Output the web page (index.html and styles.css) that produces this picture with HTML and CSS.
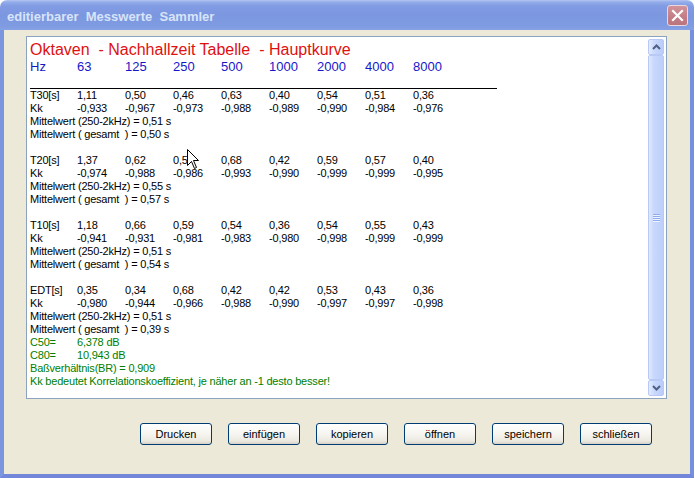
FILE: index.html
```html
<!DOCTYPE html>
<html lang="de">
<head>
<meta charset="utf-8">
<title>editierbarer Messwerte Sammler</title>
<link rel="stylesheet" href="styles.css">
</head>
<body>
<div class="window">
  <div class="titlebar">
    <span class="title">editierbarer  Messwerte  Sammler</span>
    <div class="close">
      <svg width="13" height="13" viewBox="0 0 13 13"><path d="M2 2 L11 11 M11 2 L2 11" stroke="#fff" stroke-width="2.2" stroke-linecap="square"/></svg>
    </div>
  </div>
  <div class="frame">
    <div class="memo">
      <div class="content">
        <div class="heading">Oktaven  - Nachhallzeit Tabelle  - Hauptkurve</div>
        <div class="row hz"><span>Hz</span><span>63</span><span>125</span><span>250</span><span>500</span><span>1000</span><span>2000</span><span>4000</span><span>8000</span></div>
        <div class="rule"></div>

        <div class="row"><span>T30[s]</span><span>1,11</span><span>0,50</span><span>0,46</span><span>0,63</span><span>0,40</span><span>0,54</span><span>0,51</span><span>0,36</span></div>
        <div class="row"><span>Kk</span><span>-0,933</span><span>-0,967</span><span>-0,973</span><span>-0,988</span><span>-0,989</span><span>-0,990</span><span>-0,984</span><span>-0,976</span></div>
        <div class="line">Mittelwert (250-2kHz) = 0,51 s</div>
        <div class="line">Mittelwert ( gesamt  ) = 0,50 s</div>
        <div class="line"> </div>

        <div class="row"><span>T20[s]</span><span>1,37</span><span>0,62</span><span>0,5</span><span>0,68</span><span>0,42</span><span>0,59</span><span>0,57</span><span>0,40</span></div>
        <div class="row"><span>Kk</span><span>-0,974</span><span>-0,988</span><span>-0,986</span><span>-0,993</span><span>-0,990</span><span>-0,999</span><span>-0,999</span><span>-0,995</span></div>
        <div class="line">Mittelwert (250-2kHz) = 0,55 s</div>
        <div class="line">Mittelwert ( gesamt  ) = 0,57 s</div>
        <div class="line"> </div>

        <div class="row"><span>T10[s]</span><span>1,18</span><span>0,66</span><span>0,59</span><span>0,54</span><span>0,36</span><span>0,54</span><span>0,55</span><span>0,43</span></div>
        <div class="row"><span>Kk</span><span>-0,941</span><span>-0,931</span><span>-0,981</span><span>-0,983</span><span>-0,980</span><span>-0,998</span><span>-0,999</span><span>-0,999</span></div>
        <div class="line">Mittelwert (250-2kHz) = 0,51 s</div>
        <div class="line">Mittelwert ( gesamt  ) = 0,54 s</div>
        <div class="line"> </div>

        <div class="row"><span>EDT[s]</span><span>0,35</span><span>0,34</span><span>0,68</span><span>0,42</span><span>0,42</span><span>0,53</span><span>0,43</span><span>0,36</span></div>
        <div class="row"><span>Kk</span><span>-0,980</span><span>-0,944</span><span>-0,966</span><span>-0,988</span><span>-0,990</span><span>-0,997</span><span>-0,997</span><span>-0,998</span></div>
        <div class="line">Mittelwert (250-2kHz) = 0,51 s</div>
        <div class="line">Mittelwert ( gesamt  ) = 0,39 s</div>
        <div class="row green"><span>C50=</span><span class="wide">6,378 dB</span></div>
        <div class="row green"><span>C80=</span><span class="wide">10,943 dB</span></div>
        <div class="line green">Baßverhältnis(BR) = 0,909</div>
        <div class="line green">Kk bedeutet Korrelationskoeffizient, je näher an -1 desto besser!</div>

        <svg class="cursor" width="13" height="21" viewBox="0 0 13 21"><path d="M0.5 0.5 L0.5 16.5 L4.5 12.5 L7.5 19.5 L9.5 18.5 L6.5 11.5 L11.5 11.5 Z" fill="#fff" stroke="#000" stroke-width="1"/></svg>
      </div>
      <div class="scrollbar">
        <div class="sbtn">
          <svg width="9" height="6" viewBox="0 0 9 6"><path d="M1 5 L4.5 1.5 L8 5" fill="none" stroke="#4d6185" stroke-width="2"/></svg>
        </div>
        <div class="thumb">
          <div class="grip"><i></i><i></i><i></i><i></i></div>
        </div>
        <div class="sbtn">
          <svg width="9" height="6" viewBox="0 0 9 6"><path d="M1 1 L4.5 4.5 L8 1" fill="none" stroke="#4d6185" stroke-width="2"/></svg>
        </div>
      </div>
    </div>
    <div class="buttons">
      <button class="btn">Drucken</button>
      <button class="btn">einfügen</button>
      <button class="btn">kopieren</button>
      <button class="btn">öffnen</button>
      <button class="btn">speichern</button>
      <button class="btn">schließen</button>
    </div>
  </div>
</div>
</body>
</html>
```

FILE: styles.css
```css
html, body {
  margin: 0;
  padding: 0;
  background: #ffffff;
}

.window {
  width: 694px;
  height: 478px;
  display: flex;
  flex-direction: column;
}

.titlebar {
  height: 30px;
  flex: none;
  border-radius: 7px 7px 0 0;
  background: linear-gradient(to bottom, #b4c6f2 0px, #94acea 2px, #819ce3 6px, #7b97e0 16px, #7f9be1 26px, #86a1e4 30px);
  display: flex;
  align-items: center;
  justify-content: space-between;
  padding: 0 6px 0 7px;
  box-sizing: border-box;
}

.title {
  font-family: "Liberation Sans", Arial, sans-serif;
  font-weight: bold;
  font-size: 13px;
  color: #d8e4f8;
  white-space: pre;
  margin-top: 2px;
}

.close {
  width: 21px;
  height: 21px;
  box-sizing: border-box;
  border: 1px solid #ead8de;
  border-radius: 3px;
  background: linear-gradient(to bottom, #d2939a 0%, #c57e87 55%, #bb737d 100%);
  display: flex;
  align-items: center;
  justify-content: center;
  margin-top: 1px;
}

.frame {
  flex: 1;
  background: #ece9d8;
  border-left: 4px solid #7b96df;
  border-right: 4px solid #7590dd;
  border-bottom: 4px solid #7287da;
  display: flex;
  flex-direction: column;
}

.memo {
  margin: 6px 0 0 22px;
  width: 641px;
  height: 363px;
  box-sizing: border-box;
  border: 1px solid #8ba3bf;
  background: #ffffff;
  display: flex;
}

.content {
  flex: 1;
  position: relative;
  padding: 4px 0 0 3px;
  font-family: "Liberation Sans", Arial, sans-serif;
  font-size: 11px;
  line-height: 13px;
  color: #000;
  letter-spacing: -0.2px;
}

.heading {
  font-size: 16px;
  line-height: 18px;
  color: #e01010;
  white-space: pre;
  letter-spacing: 0;
}

.row {
  display: grid;
  grid-template-columns: 47px repeat(8, 48px);
  white-space: pre;
}

.row .wide {
  grid-column: span 3;
}

.hz {
  font-size: 13px;
  line-height: 16px;
  color: #1717c8;
  letter-spacing: 0;
}

.rule {
  width: 467px;
  height: 1px;
  background: #000;
  margin-top: 13px;
}

.line {
  white-space: pre;
  height: 13px;
}

.green {
  color: #008000;
}

.cursor {
  position: absolute;
  left: 160px;
  top: 112px;
}

.scrollbar {
  width: 16px;
  margin: 2px 2px 2px 0;
  display: flex;
  flex-direction: column;
}

.sbtn {
  height: 16px;
  flex: none;
  box-sizing: border-box;
  border: 1px solid #b7c9f4;
  border-radius: 2px;
  background: linear-gradient(to right, #e3ebfe 0%, #c9d8fc 40%, #b9ccfa 100%);
  display: flex;
  align-items: center;
  justify-content: center;
}

.thumb {
  flex: 1;
  box-sizing: border-box;
  border: 1px solid #b7c9f4;
  border-radius: 2px;
  background: linear-gradient(to right, #e0e9fe 0%, #c8d7fc 35%, #bccffb 100%);
  display: flex;
  align-items: center;
  justify-content: center;
}

.grip {
  display: flex;
  flex-direction: column;
  gap: 1px;
}

.grip i {
  display: block;
  width: 7px;
  height: 1px;
  background: #8faaf0;
  box-shadow: 0 1px 0 #eef3ff;
}

.buttons {
  display: flex;
  gap: 16px;
  margin: 24px 0 0 136px;
}

.btn {
  width: 72px;
  height: 22px;
  box-sizing: border-box;
  border: 1px solid #003c74;
  border-radius: 3px;
  background: linear-gradient(to bottom, #ffffff 0%, #f6f5f0 50%, #ebe9e0 85%, #d6d0c5 100%);
  font-family: "Liberation Sans", Arial, sans-serif;
  font-size: 11px;
  color: #000;
  padding: 0;
}
```
